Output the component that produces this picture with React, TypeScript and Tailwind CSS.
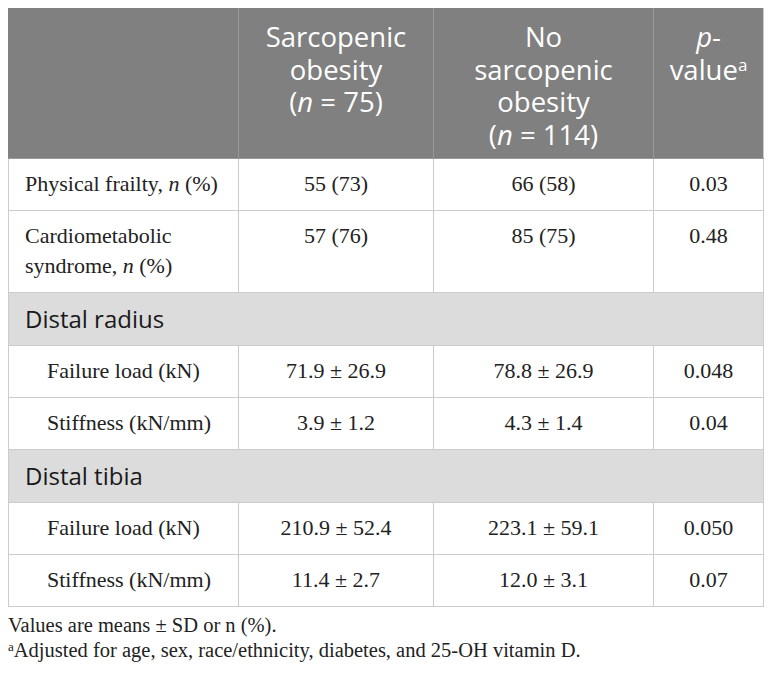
export default function App() {
  const serif = "font-['Liberation_Serif',serif]"
  const sans = "font-['Open_Sans',sans-serif]"

  const td = `border border-[#cccccc] px-4 pt-[10px] pb-[11px] align-top text-[22px] leading-[30px] text-[#222222] ${serif}`
  const tdc = `${td} text-center`
  const th = "border border-[#999999] border-t-[#808080] align-top pt-[12px] font-normal"
  const sec = `border border-[#cccccc] px-4 h-[53px] text-[24px] text-[#1a1a1a] ${sans}`

  return (
    <div className="bg-white w-[772px] h-[674px] pt-2 pl-2">
      <table className="border-collapse w-[755px] table-fixed">
        <colgroup>
          <col className="w-[230px]" />
          <col className="w-[195px]" />
          <col className="w-[220px]" />
          <col className="w-[110px]" />
        </colgroup>
        <thead>
          <tr className={`bg-[#808080] text-white text-[27.5px] leading-[32.5px] ${sans}`}>
            <th className={`${th} h-[150px] border-l-[#808080]`}></th>
            <th className={th}>
              <span className="block">Sarcopenic</span>
              <span className="block">obesity</span>
              <span className="block">(<i>n</i> = 75)</span>
            </th>
            <th className={th}>
              <span className="block">No</span>
              <span className="block">sarcopenic</span>
              <span className="block">obesity</span>
              <span className="block">(<i>n</i> = 114)</span>
            </th>
            <th className={`${th} border-r-[#cccccc]`}>
              <span className="block"><i>p</i>-</span>
              <span className="block">value<sup className="text-[17px]">a</sup></span>
            </th>
          </tr>
        </thead>
        <tbody>
          <tr>
            <td className={td}>Physical frailty, <i>n</i> (%)</td>
            <td className={tdc}>55 (73)</td>
            <td className={tdc}>66 (58)</td>
            <td className={tdc}>0.03</td>
          </tr>
          <tr>
            <td className={`${td} pb-[9px]`}>Cardiometabolic syndrome, <i>n</i> (%)</td>
            <td className={tdc}>57 (76)</td>
            <td className={tdc}>85 (75)</td>
            <td className={tdc}>0.48</td>
          </tr>
          <tr className="bg-[#dcdcdc]">
            <td colSpan={4} className={sec}>Distal radius</td>
          </tr>
          <tr>
            <td className={`${td} pl-[38px]`}>Failure load (kN)</td>
            <td className={tdc}>71.9 ± 26.9</td>
            <td className={tdc}>78.8 ± 26.9</td>
            <td className={tdc}>0.048</td>
          </tr>
          <tr>
            <td className={`${td} pl-[38px]`}>Stiffness (kN/mm)</td>
            <td className={tdc}>3.9 ± 1.2</td>
            <td className={tdc}>4.3 ± 1.4</td>
            <td className={tdc}>0.04</td>
          </tr>
          <tr className="bg-[#dcdcdc]">
            <td colSpan={4} className={sec}>Distal tibia</td>
          </tr>
          <tr>
            <td className={`${td} pl-[38px]`}>Failure load (kN)</td>
            <td className={tdc}>210.9 ± 52.4</td>
            <td className={tdc}>223.1 ± 59.1</td>
            <td className={tdc}>0.050</td>
          </tr>
          <tr>
            <td className={`${td} pl-[38px]`}>Stiffness (kN/mm)</td>
            <td className={tdc}>11.4 ± 2.7</td>
            <td className={tdc}>12.0 ± 3.1</td>
            <td className={tdc}>0.07</td>
          </tr>
        </tbody>
      </table>
      <div className={`${serif} text-[20.5px] leading-[25px] text-[#222222] mt-[6px]`}>
        <p>Values are means ± SD or n (%).</p>
        <p>
          <sup className="text-[13px]">a</sup>Adjusted for age, sex, race/ethnicity, diabetes, and 25-OH vitamin D.
        </p>
      </div>
    </div>
  )
}
